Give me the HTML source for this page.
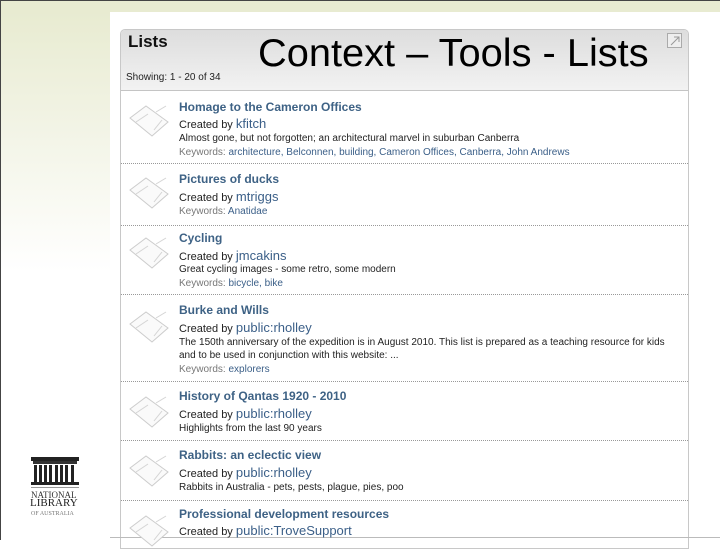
<!DOCTYPE html>
<html><head><meta charset="utf-8"><style>
*{margin:0;padding:0;box-sizing:border-box}
body{width:720px;height:540px;position:relative;overflow:hidden;background:#fff;font-family:"Liberation Sans",Arial,sans-serif}
.abs{position:absolute}
.t{position:absolute;left:179px;font-size:12px;font-weight:bold;color:#3e6285;white-space:nowrap}
.c{position:absolute;left:179px;font-size:11px;color:#222;white-space:nowrap}
.c b{font-weight:normal;font-size:13px;color:#3b5f88}
.d{position:absolute;left:179px;font-size:10px;color:#222;white-space:nowrap}
.k{position:absolute;left:179px;font-size:10px;color:#777;white-space:nowrap}
.k span{color:#3b5f88}
.sep{position:absolute;left:121px;width:567px;border-top:1px dotted #999}
.ic{position:absolute;left:128px}
</style></head><body>
<div class="abs" style="left:0;top:0;width:720px;height:12px;background:#e8ebd1"></div>
<div class="abs" style="left:0;top:0;width:720px;height:1px;background:#444"></div>
<div class="abs" style="left:0;top:12px;width:110px;height:260px;background:linear-gradient(#e8ebd1,#fff)"></div>
<div class="abs" style="left:0;top:0;width:1px;height:540px;background:#444"></div>
<div class="abs" style="left:110px;top:12px;width:610px;height:528px;background:#fff"></div>
<div class="abs" style="left:120px;top:29px;width:569px;height:520px;border:1px solid #c8c8c8;border-radius:5px 5px 0 0;background:#fff"></div>
<div class="abs" style="left:121px;top:30px;width:567px;height:61px;background:linear-gradient(#ddd,#f2f2f2);border-bottom:1px solid #c4c4c4;border-radius:4px 4px 0 0"></div>
<div class="abs" style="left:128px;top:32px;font-size:17px;font-weight:bold;color:#111">Lists</div>
<div class="abs" style="left:126px;top:72px;font-size:10px;color:#222">Showing: 1 - 20 of 34</div>
<div class="abs" style="left:258px;top:32px;font-size:39px;color:#000;white-space:nowrap;transform:scaleX(1.02);transform-origin:left">Context – Tools - Lists</div>
<div class="abs" style="left:667px;top:33px;width:15px;height:15px;border:1px solid #aaa;background:#eee"></div>
<svg class="abs" style="left:667px;top:33px" width="16" height="16"><path d="M4 12L12 4M7 4h5v5" stroke="#999" fill="none"/></svg>
<div class="abs" style="left:110px;top:537px;width:610px;height:1px;background:#bbb"></div>

<svg width="0" height="0" style="position:absolute"><defs><g id="nb"><path d="M2 18L18 6L40 22L24 36Z" fill="#fafafa" stroke="#ccc"/><path d="M8 22L20 14M26 30L34 20M28 12L38 6" stroke="#d4d4d4" fill="none"/></g></defs></svg>

<svg class="ic" style="top:100px" width="44" height="40"><use href="#nb"/></svg>
<div class="t" style="top:100px">Homage to the Cameron Offices</div>
<div class="c" style="top:116px">Created by <b>kfitch</b></div>
<div class="d" style="top:133px">Almost gone, but not forgotten; an architectural marvel in suburban Canberra</div>
<div class="k" style="top:147px">Keywords: <span>architecture, Belconnen, building, Cameron Offices, Canberra, John Andrews</span></div>
<div class="sep" style="top:163px"></div>

<svg class="ic" style="top:172px" width="44" height="40"><use href="#nb"/></svg>
<div class="t" style="top:172px">Pictures of ducks</div>
<div class="c" style="top:189px">Created by <b>mtriggs</b></div>
<div class="k" style="top:206px">Keywords: <span>Anatidae</span></div>
<div class="sep" style="top:225px"></div>

<svg class="ic" style="top:232px" width="44" height="40"><use href="#nb"/></svg>
<div class="t" style="top:231px">Cycling</div>
<div class="c" style="top:248px">Created by <b>jmcakins</b></div>
<div class="d" style="top:264px">Great cycling images - some retro, some modern</div>
<div class="k" style="top:278px">Keywords: <span>bicycle, bike</span></div>
<div class="sep" style="top:294px"></div>

<svg class="ic" style="top:306px" width="44" height="40"><use href="#nb"/></svg>
<div class="t" style="top:303px">Burke and Wills</div>
<div class="c" style="top:320px">Created by <b>public:rholley</b></div>
<div class="d" style="top:337px">The 150th anniversary of the expedition is in August 2010. This list is prepared as a teaching resource for kids</div>
<div class="d" style="top:350px">and to be used in conjunction with this website: ...</div>
<div class="k" style="top:364px">Keywords: <span>explorers</span></div>
<div class="sep" style="top:381px"></div>

<svg class="ic" style="top:391px" width="44" height="40"><use href="#nb"/></svg>
<div class="t" style="top:389px">History of Qantas 1920 - 2010</div>
<div class="c" style="top:406px">Created by <b>public:rholley</b></div>
<div class="d" style="top:423px">Highlights from the last 90 years</div>
<div class="sep" style="top:440px"></div>

<svg class="ic" style="top:450px" width="44" height="40"><use href="#nb"/></svg>
<div class="t" style="top:448px">Rabbits: an eclectic view</div>
<div class="c" style="top:465px">Created by <b>public:rholley</b></div>
<div class="d" style="top:482px">Rabbits in Australia - pets, pests, plague, pies, poo</div>
<div class="sep" style="top:500px"></div>

<svg class="ic" style="top:510px" width="44" height="40"><use href="#nb"/></svg>
<div class="t" style="top:507px">Professional development resources</div>
<div class="c" style="top:523px">Created by <b>public:TroveSupport</b></div>

<svg class="abs" style="left:30px;top:457px" width="50" height="32">
<rect x="1" y="0" width="48" height="4" fill="#222"/>
<rect x="3" y="4" width="44" height="3" fill="#333"/>
<g fill="#222"><rect x="4" y="8" width="3" height="17"/><rect x="9" y="8" width="3" height="17"/><rect x="14" y="8" width="3" height="17"/><rect x="19" y="8" width="3" height="17"/><rect x="25" y="8" width="3" height="17"/><rect x="30" y="8" width="3" height="17"/><rect x="35" y="8" width="3" height="17"/><rect x="41" y="8" width="3" height="17"/></g>
<rect x="1" y="25" width="48" height="3" fill="#222"/><rect x="1" y="30" width="48" height="1" fill="#999"/></svg>
<div class="abs" style="left:31px;top:490px;font-family:'Liberation Serif',serif;font-size:9px;color:#333">NATIONAL</div>
<div class="abs" style="left:30px;top:497px;font-family:'Liberation Serif',serif;font-size:11px;color:#222">LIBRARY</div>
<div class="abs" style="left:31px;top:511px;font-family:'Liberation Serif',serif;font-size:6px;color:#777">OF AUSTRALIA</div>
</body></html>
